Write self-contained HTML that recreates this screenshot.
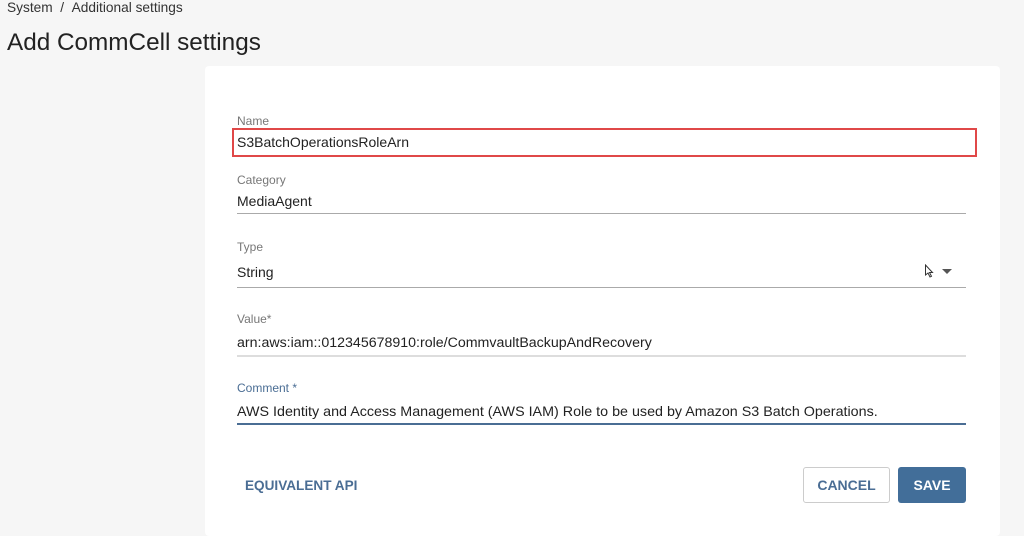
<!DOCTYPE html>
<html><head><style>
*{margin:0;padding:0;box-sizing:border-box}
body{width:1024px;height:524px;background:#f6f6f6;font-family:"Liberation Sans",sans-serif;position:relative;overflow:hidden;color:#222}
.a{position:absolute;white-space:nowrap}
.lbl{font-size:12px;color:#777}
.val{font-size:14px;color:#222}
.ln{position:absolute;left:237px;width:729px;height:1px;background:#aaa}
</style></head><body>
<div class="a" style="left:7px;top:0px;font-size:13.7px;color:#333">System&nbsp;&nbsp;/&nbsp;&nbsp;Additional settings</div>
<div class="a" style="left:7px;top:29px;font-size:24.3px;color:#222">Add CommCell settings</div>
<div class="a" style="left:205px;top:66px;width:795px;height:470px;background:#fff;border-radius:4px"></div>

<div class="a lbl" style="left:237px;top:114px">Name</div>
<div class="a" style="left:232px;top:128px;width:745px;height:29px;border:2px solid #e04848"></div>
<div class="a val" style="left:237px;top:134px">S3BatchOperationsRoleArn</div>

<div class="a lbl" style="left:237px;top:173px">Category</div>
<div class="a val" style="left:237px;top:193px">MediaAgent</div>
<div class="ln" style="top:213px"></div>

<div class="a lbl" style="left:237px;top:240px">Type</div>
<div class="a val" style="left:237px;top:264px">String</div>
<svg class="a" style="left:924px;top:264px" width="32" height="14"><path d="M1.5 1v10l2.5-2 2 4 1.5-.7-2-3.8h3z" fill="#fff" stroke="#333" stroke-width="1"/><path d="M18 5h10l-5 5z" fill="#555"/></svg>
<div class="ln" style="top:287px"></div>

<div class="a lbl" style="left:237px;top:312px">Value*</div>
<div class="a val" style="left:237px;top:335px;font-size:14.2px">arn:aws:iam::012345678910:role/CommvaultBackupAndRecovery</div>
<div class="ln" style="top:355px;height:2px;background:#ddd"></div>

<div class="a lbl" style="left:237px;top:381px;color:#4a6d94">Comment *</div>
<div class="a val" style="left:237px;top:403px;transform-origin:0 0;transform:scaleX(1.022)">AWS Identity and Access Management (AWS IAM) Role to be used by Amazon S3 Batch Operations.</div>
<div class="ln" style="top:423px;height:2px;background:#4a6d94"></div>

<div class="a" style="left:245px;top:477px;font-size:14px;font-weight:bold;color:#4a6d94;transform-origin:0 0;transform:scaleX(0.97)">EQUIVALENT API</div>
<div class="a" style="left:803px;top:467px;width:87px;height:36px;border:1px solid #ccc;border-radius:3px;font-size:14px;font-weight:bold;color:#4a6d94;text-align:center;line-height:34px">CANCEL</div>
<div class="a" style="left:898px;top:467px;width:68px;height:36px;background:#426e99;border-radius:3px;font-size:14px;font-weight:bold;color:#fff;text-align:center;line-height:36px">SAVE</div>
</body></html>
